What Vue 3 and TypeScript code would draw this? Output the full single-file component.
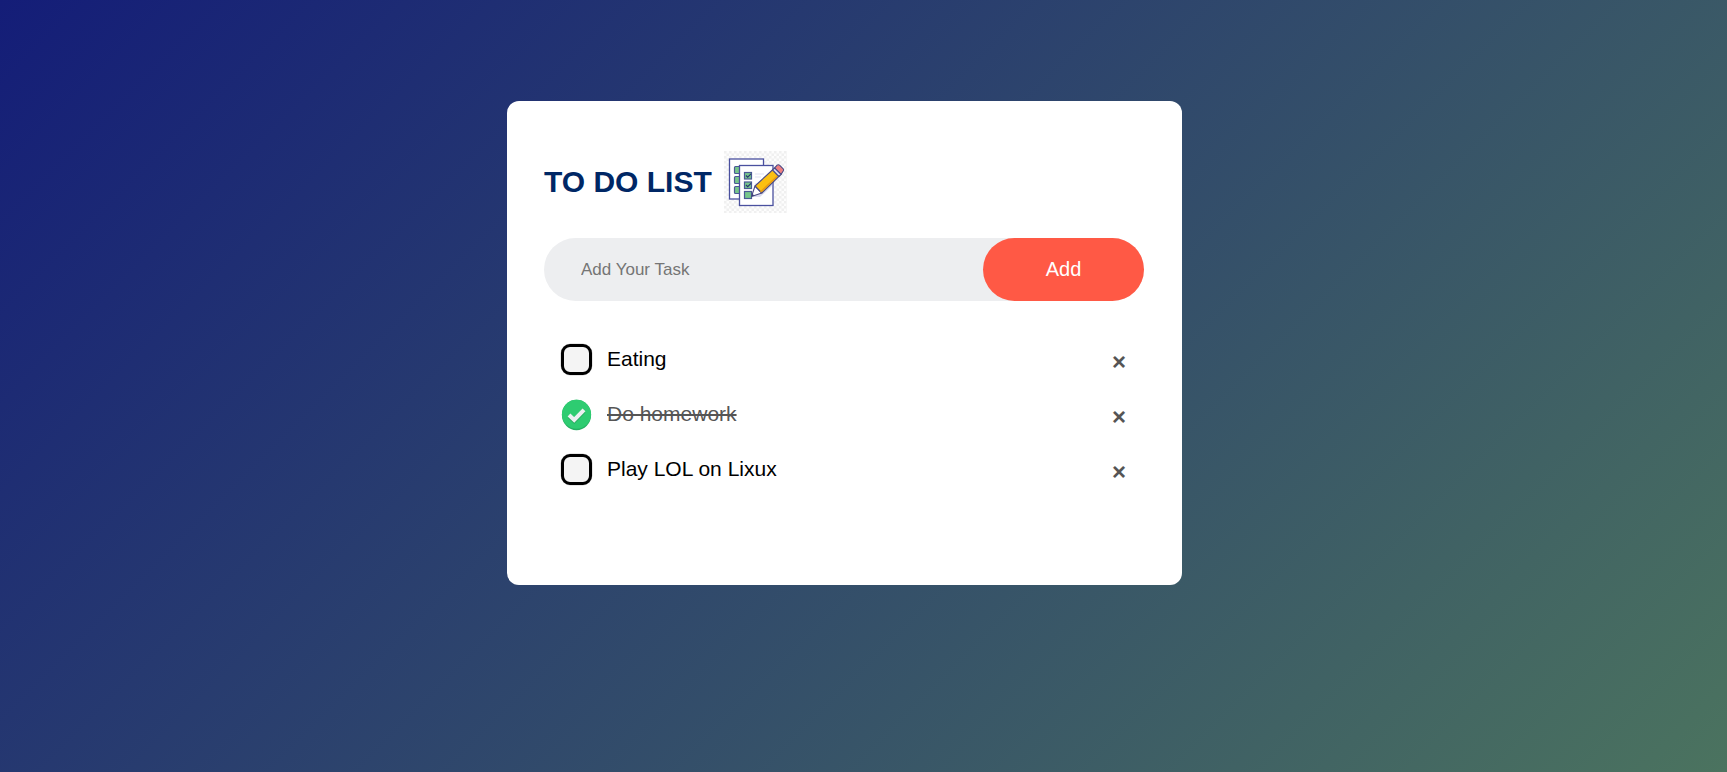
<script setup lang="ts">
import { ref } from 'vue'

interface Task {
  id: number
  text: string
  done: boolean
}

const draft = ref('')
const tasks = ref<Task[]>([
  { id: 1, text: 'Eating', done: false },
  { id: 2, text: 'Do homework', done: true },
  { id: 3, text: 'Play LOL on Lixux', done: false },
])
let nextId = 4

function addTask(): void {
  const text = draft.value.trim()
  if (!text) return
  tasks.value.push({ id: nextId++, text, done: false })
  draft.value = ''
}

function removeTask(id: number): void {
  tasks.value = tasks.value.filter((task) => task.id !== id)
}
</script>

<template>
  <main class="page">
    <section class="card">
      <h1 class="title">
        TO DO LIST
        <svg class="logo" viewBox="0 0 63 62" aria-hidden="true">
          <defs>
            <pattern id="checker" width="5" height="5" patternUnits="userSpaceOnUse">
              <rect width="5" height="5" fill="#fdfdfd" />
              <path d="M0 0h2.5v5H5V2.5H0z" fill="#f0f0f0" />
            </pattern>
          </defs>
          <rect width="63" height="62" fill="url(#checker)" />
          <rect x="5.5" y="8" width="34" height="40" fill="#fff" stroke="#4a509f" stroke-width="1.3" />
          <g fill="#76c68b" stroke="#4a5a94" stroke-width="1.2">
            <rect x="10.5" y="15.5" width="8" height="7" rx="1" />
            <rect x="10.5" y="25.5" width="8" height="7" rx="1" />
            <rect x="10.5" y="35.5" width="8" height="7" rx="1" />
          </g>
          <rect x="15.5" y="14.5" width="33.5" height="40" fill="#fff" stroke="#4a509f" stroke-width="1.3" />
          <path d="M31 23h9M31 26h6M31 33h3" stroke="#dfe1f1" stroke-width="1" />
          <path d="M28 46l8 0 12-11v-8z" fill="#d9dbee" />
          <g fill="#76c68b" stroke="#4a5a94" stroke-width="1.2">
            <rect x="20.5" y="21.5" width="7" height="6.5" />
            <rect x="20.5" y="31" width="7" height="6.5" />
            <rect x="20.5" y="40.5" width="7" height="7" />
          </g>
          <path d="M22 24.5l1.7 1.7 3.3-3.3M22 34l1.7 1.7 3.3-3.3" fill="none" stroke="#26356f" stroke-width="1.1" />
          <g stroke="#4a4a85" stroke-width="1.1" stroke-linejoin="round">
            <path d="M27.5 45.5l3.5-10.5 6.8 7z" fill="#fff" />
            <path d="M31 35l18.500-17 6.300 6.500L37.800 42z" fill="#fbc011" />
            <path d="M48.500 19l2.200-2.200 6.500 6.500-2.400 2.200z" fill="#d5d8ef" />
            <path d="M50.700 16.800l2.400-2.600q1.200-1 2.400 0l3.700 3.600q1 1.100 0 2.200l-2 3.300z" fill="#ee7f80" />
          </g>
          <path d="M36.5 41L53 25.500" stroke="#e99a14" stroke-width="1.5" />
          <path d="M27.5 45.500l1-2.800 1.700 1.700z" fill="#34396f" />
        </svg>
      </h1>

      <form class="entry" @submit.prevent="addTask">
        <input v-model="draft" class="entry-text" type="text" placeholder="Add Your Task" aria-label="Add Your Task" />
        <button class="entry-add" type="submit">Add</button>
      </form>

      <ul class="tasks">
        <li v-for="task in tasks" :key="task.id" class="task">
          <label class="task-label">
            <span class="mark">
              <input v-model="task.done" class="mark-input" type="checkbox" />
              <svg v-if="task.done" viewBox="0 0 35 35" aria-hidden="true">
                <ellipse cx="17.5" cy="18" rx="14.6" ry="15.2" fill="#25b062" />
                <ellipse cx="17.5" cy="17.3" rx="14.6" ry="14.5" fill="#2ecc71" />
                <path d="M10 19.2l5.2 5L25 14" fill="none" stroke="#27ae60" stroke-width="4" />
                <path d="M10 18l5.2 5L25 12.8" fill="none" stroke="#ecf0f1" stroke-width="4" />
              </svg>
              <svg v-else viewBox="0 0 35 35" aria-hidden="true">
                <rect x="1.5" y="1.5" width="32" height="32" rx="10" fill="#cfcfcf" />
                <rect x="3.5" y="3.5" width="28" height="28" rx="7.5" fill="#f4f4f4" stroke="#000" stroke-width="3" />
              </svg>
            </span>
            <span class="task-text" :class="{ done: task.done }">{{ task.text }}</span>
          </label>
          <button class="remove" type="button" :aria-label="`Remove ${task.text}`" @click="removeTask(task.id)">×</button>
        </li>
      </ul>
    </section>
  </main>
</template>

<style>
body {
  margin: 0;
}
</style>

<style scoped>
.page {
  box-sizing: border-box;
  min-height: 100vh;
  padding: 101px 38px 13px 0;
  background: linear-gradient(135deg, #141d78, #4b735f);
  font-family: Arial, "Liberation Sans", sans-serif;
}

.card {
  box-sizing: border-box;
  max-width: 675px;
  margin: 0 auto;
  padding: 50px 38px 88px 37px;
  border-radius: 12px;
  background: #fff;
}

.title {
  display: flex;
  align-items: center;
  gap: 12px;
  margin: 0 0 25px;
  color: #002765;
  font-size: 30px;
  line-height: 36px;
  font-weight: 700;
}

.logo {
  width: 63px;
  height: 62px;
}

.entry {
  display: flex;
  margin: 0 0 31px;
  border-radius: 32px;
  background: #edeef0;
}

.entry-text {
  flex: 1;
  min-width: 0;
  padding: 0 0 0 37px;
  border: none;
  outline: none;
  background: transparent;
  color: #000;
  font-family: inherit;
  font-size: 17px;
}

.entry-text::placeholder {
  color: #757575;
}

.entry-add {
  width: 161px;
  height: 63px;
  padding: 0;
  border: none;
  border-radius: 32px;
  background: #ff5945;
  color: #fff;
  font-family: inherit;
  font-size: 20px;
  cursor: pointer;
}

.tasks {
  margin: 0;
  padding: 0;
  list-style: none;
}

.task {
  display: flex;
  align-items: center;
  height: 55px;
}

.task-label {
  display: flex;
  flex: 1;
  align-items: center;
  gap: 13px;
  padding-left: 15px;
  cursor: pointer;
}

.mark {
  position: relative;
  width: 35px;
  height: 35px;
}

.mark svg {
  display: block;
}

.mark-input {
  position: absolute;
  inset: 0;
  width: 100%;
  height: 100%;
  margin: 0;
  opacity: 0;
  cursor: pointer;
}

.task-text {
  padding-bottom: 2px;
  color: #000;
  font-size: 21px;
  line-height: 25px;
}

.task-text.done {
  color: #555;
  text-decoration: line-through;
}

.remove {
  width: 50px;
  height: 55px;
  padding: 5px 0 0;
  border: none;
  background: transparent;
  color: #555;
  font-family: inherit;
  font-size: 24px;
  font-weight: 700;
  line-height: 50px;
  cursor: pointer;
}
</style>
